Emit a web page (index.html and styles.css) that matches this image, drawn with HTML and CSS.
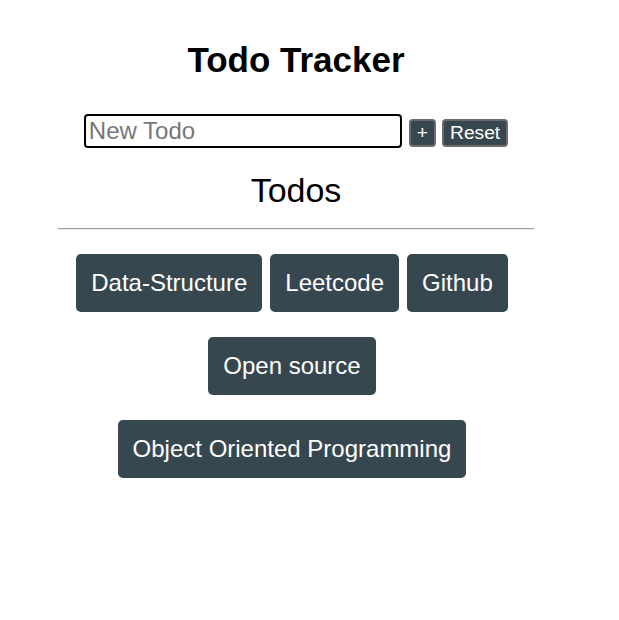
FILE: index.html
```html
<!DOCTYPE html>
<html lang="en">
<head>
<meta charset="utf-8">
<title>Todo Tracker</title>
<link rel="stylesheet" href="styles.css">
</head>
<body>
<div class="app">
  <h1 class="title">Todo Tracker</h1>
  <form class="add-form">
    <input class="new-todo" type="text" placeholder="New Todo">
    <button class="small-btn add-btn" type="button">+</button>
    <button class="small-btn" type="button">Reset</button>
  </form>
  <h2 class="subtitle">Todos</h2>
  <hr class="divider">
  <div class="todo-list">
    <button class="todo" type="button">Data-Structure</button>
    <button class="todo" type="button">Leetcode</button>
    <button class="todo" type="button">Github</button>
    <button class="todo" type="button">Open source</button>
    <button class="todo" type="button">Object Oriented Programming</button>
  </div>
</div>
</body>
</html>
```

FILE: styles.css
```css
html, body {
  margin: 0;
  padding: 0;
  background: #ffffff;
}

body {
  font-family: "Liberation Sans", Arial, sans-serif;
  color: #000000;
}

.app {
  width: 576px;
  margin-left: 8px;
  padding-top: 40px;
  text-align: center;
}

.title {
  margin: 0;
  font-size: 35px;
  font-weight: bold;
  line-height: 40px;
}

.add-form {
  margin: 34px 0 0 0;
  display: flex;
  justify-content: center;
  align-items: flex-end;
}

.new-todo {
  box-sizing: border-box;
  width: 318px;
  height: 34px;
  margin: 0;
  padding: 1px 3px;
  border: 2px solid #000000;
  border-radius: 4px;
  font-family: "Liberation Sans", Arial, sans-serif;
  font-size: 24px;
  color: #000;
  outline: none;
}

.new-todo::placeholder {
  color: #777777;
}

.small-btn {
  margin: 0 0 1px 6px;
  padding: 1px 6px;
  border: 2px solid #6b6b6b;
  border-radius: 4px;
  background: #37474f;
  color: #ffffff;
  font-family: "Liberation Sans", Arial, sans-serif;
  font-size: 19.2px;
  line-height: 22px;
}

.add-btn {
  margin-left: 7px;
}

.subtitle {
  margin: 24px 0 0 0;
  font-size: 34px;
  font-weight: normal;
  line-height: 37px;
}

.divider {
  margin: 19px 50px 0 50px;
  height: 0;
  border: 0;
  border-top: 1px solid #9a9a9a;
  border-bottom: 1px solid #eeeeee;
}

.todo-list {
  margin: 24px 50px 0 50px;
  display: flex;
  flex-wrap: wrap;
  justify-content: center;
}

.todo {
  margin: 0 8px 25px 0;
  padding: 15px;
  border: none;
  border-radius: 5px;
  background: #37474f;
  color: #ffffff;
  font-family: "Liberation Sans", Arial, sans-serif;
  font-size: 24px;
  line-height: 28px;
}
```
